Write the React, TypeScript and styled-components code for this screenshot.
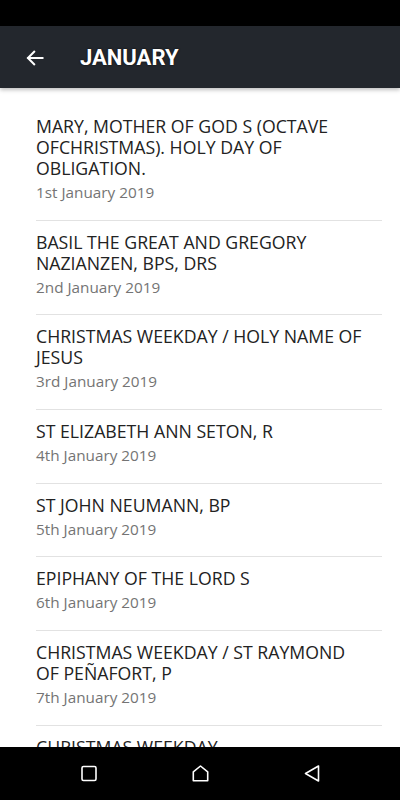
import React from 'react';
import styled, { createGlobalStyle } from 'styled-components';

type Feast = {
  title: string;
  date: string;
};

const feasts: Feast[] = [
  { title: 'MARY, MOTHER OF GOD S (OCTAVE OFCHRISTMAS). HOLY DAY OF OBLIGATION.', date: '1st January 2019' },
  { title: 'BASIL THE GREAT AND GREGORY NAZIANZEN, BPS, DRS', date: '2nd January 2019' },
  { title: 'CHRISTMAS WEEKDAY / HOLY NAME OF JESUS', date: '3rd January 2019' },
  { title: 'ST ELIZABETH ANN SETON, R', date: '4th January 2019' },
  { title: 'ST JOHN NEUMANN, BP', date: '5th January 2019' },
  { title: 'EPIPHANY OF THE LORD S', date: '6th January 2019' },
  { title: 'CHRISTMAS WEEKDAY / ST RAYMOND OF PEÑAFORT, P', date: '7th January 2019' },
  { title: 'CHRISTMAS WEEKDAY', date: '8th January 2019' },
];

function App() {
  return (
    <>
      <GlobalStyle />
      <Screen>
        <StatusBar />
        <Toolbar>
          <BackButton aria-label="back">
            <svg width="20" height="20" viewBox="0 0 24 24" fill="none" stroke="#fff" strokeWidth="2.4" strokeLinecap="square">
              <path d="M21 12H4" />
              <path d="M11 4.5L3.5 12L11 19.5" />
            </svg>
          </BackButton>
          <Title>JANUARY</Title>
        </Toolbar>
        <List>
          {feasts.map((f) => (
            <Item key={f.date}>
              <ItemTitle>{f.title}</ItemTitle>
              <ItemDate>{f.date}</ItemDate>
            </Item>
          ))}
        </List>
        <NavBar>
          <svg width="16" height="17" viewBox="0 0 16 17" fill="none" stroke="#fff" strokeWidth="1.6">
            <rect x="1" y="1.5" width="14" height="14" rx="1.5" />
          </svg>
          <svg width="17" height="17" viewBox="0 0 17 17" fill="none" stroke="#fff" strokeWidth="1.6" strokeLinejoin="round">
            <path d="M1.3 15.8V6.8L8.5 1L15.7 6.8V15.8Z" />
          </svg>
          <svg width="16" height="17" viewBox="0 0 16 17" fill="none" stroke="#fff" strokeWidth="1.6" strokeLinejoin="round">
            <path d="M14.5 1V16L1.5 8.5Z" />
          </svg>
        </NavBar>
      </Screen>
    </>
  );
}

const GlobalStyle = createGlobalStyle`
  html, body {
    margin: 0;
    padding: 0;
    background: #fff;
  }
`;
const Screen = styled.div`
  width: 400px;
  height: 800px;
  display: flex;
  flex-direction: column;
  overflow: hidden;
  background: #fff;
`;
const StatusBar = styled.div`
  height: 26px;
  background: #000;
  flex-shrink: 0;
`;
const Toolbar = styled.div`
  height: 62px;
  flex-shrink: 0;
  background: #23272d;
  display: flex;
  align-items: center;
  padding-left: 25px;
  box-shadow: 0 2px 4px rgba(0, 0, 0, 0.25);
  position: relative;
  z-index: 1;
`;
const BackButton = styled.div`
  width: 20px;
  height: 20px;
  display: flex;
  margin-right: 35px;
  margin-top: 1px;
`;
const Title = styled.div`
  font-family: Roboto, 'Liberation Sans', sans-serif;
  font-weight: bold;
  font-size: 22px;
  color: #fff;
  text-shadow: 0 0 2px rgba(0, 0, 0, 0.8);
`;
const List = styled.div`
  flex: 1;
  min-height: 0;
  overflow: hidden;
  padding: 17px 18px 0 36px;
`;
const Item = styled.div`
  padding: 11px 0 17.7px;
  border-bottom: 1px solid #e2e2e2;
`;
const ItemTitle = styled.div`
  font-family: 'Open Sans', sans-serif;
  font-size: 17.7px;
  line-height: 21px;
  color: #222;
  margin-bottom: 3px;
  padding-right: 14px;
`;
const ItemDate = styled.div`
  font-family: 'Open Sans', sans-serif;
  font-size: 15.3px;
  line-height: 20px;
  color: #747474;
`;
const NavBar = styled.div`
  height: 53px;
  flex-shrink: 0;
  background: #000;
  display: flex;
  align-items: center;
  justify-content: center;
  gap: 95px;
  padding-left: 1px;
`;

export default App;
